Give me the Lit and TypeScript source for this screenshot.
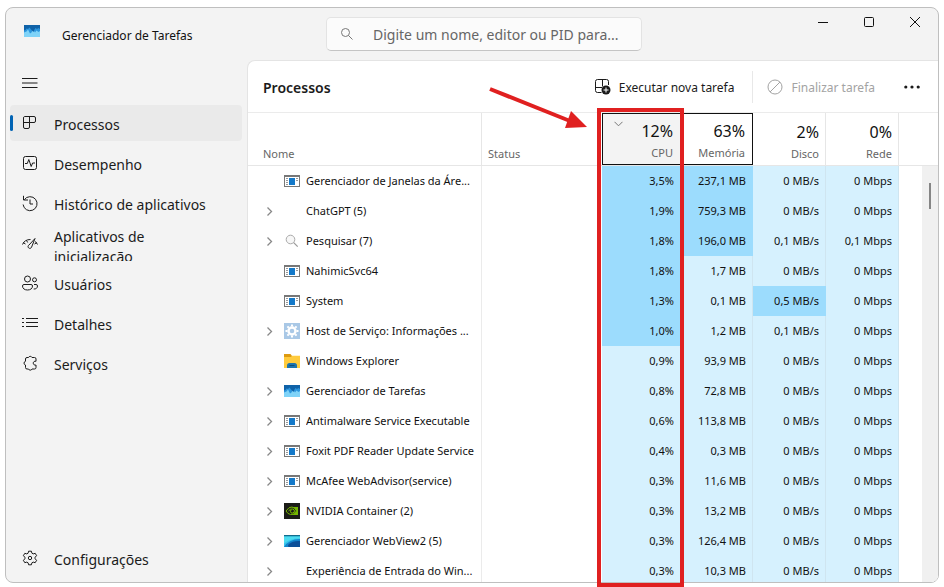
import { LitElement, html, svg, css, nothing } from "lit";
import { customElement, state } from "lit/decorators.js";
import { classMap } from "lit/directives/class-map.js";

const line = (body: unknown, cls = "ico") =>
  html`<svg class=${cls} viewBox="0 0 16 16" aria-hidden="true">${body}</svg>`;

const icons = {
  menu: line(svg`<path d="M0 3.500h15.500M0 8h15.500M0 12.500h15.500"/>`),
  processos: line(svg`<path d="M2.500 1.500h9.500a1.500 1.500 0 0 1 1.500 1.500v3a1.500 1.500 0 0 1-1.500 1.500h-4.500v4.500a1.500 1.500 0 0 1-1.500 1.500h-3a1.500 1.500 0 0 1-1.500-1.500v-9a1.500 1.500 0 0 1 1-1.500zM7.500 1.500v6M1.500 7.500h6"/>`),
  desempenho: line(svg`<rect x="1.500" y="1.500" width="13" height="13" rx="2"/><path d="M3 8.500h2.300l1.500-4 2.400 7 1.400-3.500h2.400"/>`),
  historico: line(svg`<path d="M2.300 4.700A7 7 0 1 1 1.100 9.500M1.500 .8v4.200h4.500M8 4.500v4.500h3"/>`),
  inicializacao: line(svg`<path d="M.5 9.500q2-5 8-5M13 6.500a8 8 0 0 1 2.500 3M1 7.500l2.500 1.500M4.500 5.500l1.200 2M15 7.500l-2.500 1.500M13 3.500l-6 6.500a1.800 1.800 0 1 0 2.500 2.300z"/>`),
  usuarios: line(svg`<circle cx="5.500" cy="4" r="3"/><circle cx="12.500" cy="4.800" r="2"/><path d="M2 9.500h7a1.500 1.500 0 0 1 1.500 1.500c0 2.500-2 4-5 4s-5-1.500-5-4a1.500 1.500 0 0 1 1.500-1.500zM12 9.500h2a1.500 1.500 0 0 1 1.500 1.500c0 2-1.500 3.200-3.800 3"/>`),
  detalhes: line(svg`<path d="M4 3.500h12M4 7.500h12M4 11.500h12M0 3.500h2M0 7.500h2M0 11.500h2"/>`),
  servicos: line(svg`<path d="M5 2.500h1.500a1.900 1.900 0 0 1 3.500 0h2.500a1.500 1.500 0 0 1 1.500 1.500v2.300a2 2 0 1 0 0 3.700v2.500a1.500 1.500 0 0 1-1.500 1.500h-2.500a1.900 1.900 0 0 1-3.500 0h-1.500a1.500 1.500 0 0 1-1.500-1.500v-2.500a1.900 1.900 0 0 1 0-3.700v-2.300a1.500 1.500 0 0 1 1.500-1.500z"/>`),
  config: line(svg`<path d="M6.600 1.200h2.800l.5 2 1.300.7 2-.6 1.400 2.400-1.500 1.500v1.600l1.500 1.500-1.400 2.400-2-.6-1.300.7-.5 2h-2.800l-.5-2-1.300-.7-2 .6-1.400-2.400 1.500-1.500v-1.600l-1.500-1.500 1.400-2.400 2 .6 1.300-.7z"/><circle cx="8" cy="8" r="1.700"/>`),
  executar: line(svg`<path d="M6.500 13.500h-4a2 2 0 0 1-2-2v-9a2 2 0 0 1 2-2h9a2 2 0 0 1 2 2v3.500M7.500 .5v7M.5 8.500h6.500"/><circle cx="11" cy="11" r="4.500" class="fill"/><path class="white" d="M11 8.500v5M8.500 11h5"/>`),
  finalizar: line(svg`<circle cx="8" cy="8" r="7"/><path d="M3 13l10-10"/>`),
  mais: line(svg`<circle cx="1.800" cy="8" r="1.600" class="fill"/><circle cx="8" cy="8" r="1.600" class="fill"/><circle cx="14.200" cy="8" r="1.600" class="fill"/>`),
  lupa: line(svg`<circle cx="6.500" cy="6.500" r="4"/><path d="M9.500 9.500l4 4"/>`),
};

const gerenciador = svg`<rect y="2" width="16" height="12" fill="#7fd3f8"/><path d="M0 2h16v6l-1.500 1-2-1.500-1.500 2-2-3-1.500 3-1.500 1-2-4-1.500 2-2.500 1z" fill="#2b95dd"/><path d="M0 2h16v4l-1.500-1-1.500 1-1.500-1-1 1.500-1 2.500-2-2-2-2.500-1.500 1.500-1.500-.5-1 1.500-1.500.5z" fill="#0f62a8"/>`;

const appIcons: Record<string, unknown> = {
  janela: svg`<rect x=".5" y="2.500" width="15" height="11" fill="#fff" stroke="#777"/><path d="M0 3h16" stroke="#777" stroke-width="2"/><path d="M2 5.500h2M2 7.500h2M2 9.500h2M2 11.500h2M12 5.500h2M12 7.500h2" stroke="#999"/><rect x="5" y="5" width="6" height="7" fill="#1479c9"/>`,
  lupa: svg`<circle cx="6.500" cy="6.500" r="4.300" fill="#f7f7f7" stroke="#aaa"/><path d="M9.700 9.700l4 4" stroke="#999" stroke-width="1.200"/>`,
  host: svg`<rect width="16" height="16" fill="#a9c8e6"/><circle cx="8" cy="8" r="3.500" fill="none" stroke="#fff" stroke-width="2.400"/><path d="M8 1.500v2M8 12.500v2M1.500 8h2M12.500 8h2M3.400 3.400l1.400 1.400M11.200 11.200l1.400 1.400M12.600 3.400l-1.400 1.400M4.800 11.200l-1.400 1.400" stroke="#fff" stroke-width="2"/>`,
  pasta: svg`<path d="M0 1h6.500l1.500 2v3h-8z" fill="#dd9a10"/><path d="M0 4h7l1-1.200h8v12.200h-16z" fill="#ffcb3d"/><path d="M3 15v-2.500q0-2.500 2.500-2.500h5q2.500 0 2.500 2.500v2.500z" fill="#1d74ad"/><path d="M5.500 12.500h5" stroke="#0d4c78"/>`,
  gerenciador,
  nvidia: svg`<rect width="16" height="16" fill="#1b1c17"/><path d="M7 4h7v8h-7z" fill="#76b900"/><path d="M2 8q3-4.500 6-4 3 .5 4.500 4-3 4-6 3.500-3-.5-4.500-3.500z" fill="#1b1c17" stroke="#76b900"/><path d="M4.500 8q2-2.500 4-2t2 2-2 2-2-1.500 1-1.500" fill="none" stroke="#76b900"/>`,
  webview: svg`<rect y="2" width="16" height="12" fill="#38c4ec"/><path d="M0 2h16v1.500h-16z" fill="#126c8c"/><path d="M0 3.500h16v2q-9-.5-16 5z" fill="#4cdcf0"/><path d="M0 14q5-8 16-8v8z" fill="#1284cc"/><path d="M5 14q-2-1 0-3 4-3.500 11-3v6z" fill="#0c4f99"/>`,
};

interface Proc { nome: string; icone?: string; grupo?: boolean; v: string[]; hot: string; }

const p = (nome: string, icone: string, grupo: boolean, v: string, hot: string): Proc =>
  ({ nome, icone, grupo, v: v.split("|"), hot });

// "hot" marks which of CPU, memory, disk and network are drawn in the stronger blue
const processos: Proc[] = [
  p("Gerenciador de Janelas da Áre...", "janela", false, "3,5%|237,1 MB|0 MB/s|0 Mbps", "1100"),
  p("ChatGPT (5)", "", true, "1,9%|759,3 MB|0 MB/s|0 Mbps", "1100"),
  p("Pesquisar (7)", "lupa", true, "1,8%|196,0 MB|0,1 MB/s|0,1 Mbps", "1100"),
  p("NahimicSvc64", "janela", false, "1,8%|1,7 MB|0 MB/s|0 Mbps", "1000"),
  p("System", "janela", false, "1,3%|0,1 MB|0,5 MB/s|0 Mbps", "1010"),
  p("Host de Serviço: Informações ...", "host", true, "1,0%|1,2 MB|0,1 MB/s|0 Mbps", "1000"),
  p("Windows Explorer", "pasta", false, "0,9%|93,9 MB|0 MB/s|0 Mbps", "0000"),
  p("Gerenciador de Tarefas", "gerenciador", true, "0,8%|72,8 MB|0 MB/s|0 Mbps", "0000"),
  p("Antimalware Service Executable", "janela", true, "0,6%|113,8 MB|0 MB/s|0 Mbps", "0000"),
  p("Foxit PDF Reader Update Service", "janela", true, "0,4%|0,3 MB|0 MB/s|0 Mbps", "0000"),
  p("McAfee WebAdvisor(service)", "janela", true, "0,3%|11,6 MB|0 MB/s|0 Mbps", "0000"),
  p("NVIDIA Container (2)", "nvidia", true, "0,3%|13,2 MB|0 MB/s|0 Mbps", "0000"),
  p("Gerenciador WebView2 (5)", "webview", true, "0,3%|126,4 MB|0 MB/s|0 Mbps", "0000"),
  p("Experiência de Entrada do Win...", "", true, "0,3%|10,3 MB|0 MB/s|0 Mbps", "0000"),
];

const nav: [string, unknown][] = [
  ["Processos", icons.processos],
  ["Desempenho", icons.desempenho],
  ["Histórico de aplicativos", icons.historico],
  ["Aplicativos de inicialização", icons.inicializacao],
  ["Usuários", icons.usuarios],
  ["Detalhes", icons.detalhes],
  ["Serviços", icons.servicos],
];

const metricas = [
  ["12%", "CPU", "boxed sorted"],
  ["63%", "Memória", "boxed"],
  ["2%", "Disco", ""],
  ["0%", "Rede", ""],
];

@customElement("app-root")
export class AppRoot extends LitElement {
  @state() private atual = "Processos";

  static styles = css`
    :host {
      display: block;
      position: relative;
      box-sizing: border-box;
      height: 100vh;
      padding: 7px 5px 4px;
      background: #fff;
      color: #1b1b1b;
      font-family: "Noto Sans", "Open Sans", sans-serif;
      font-size: 12px;
    }
    * { box-sizing: border-box; }
    button {
      font: inherit; color: inherit; background: none; border: 0;
      padding: 0; margin: 0; text-align: left;
    }
    .ico {
      width: 16px; height: 16px; flex: none; display: block;
      fill: none; stroke: currentColor; stroke-width: 1; overflow: visible;
    }
    .ico .fill { fill: currentColor; stroke: none; }
    .ico .white { stroke: #fff; }
    .app { width: 16px; height: 16px; flex: none; display: block; }

    .window {
      height: 100%; display: flex; flex-direction: column;
      border: 1px solid #bfbfbf; border-radius: 8px;
      background: #f3f3f3; overflow: hidden;
    }
    .titlebar { display: flex; flex: none; height: 52px; }
    .brand { display: flex; width: 320px; padding-left: 18px; gap: 22px; }
    .brand .app { margin-top: 15px; }
    .brand h1 { margin: 0; font-size: 12px; font-weight: 400; line-height: 56px; color: #111; }
    .search {
      display: flex; align-items: center; gap: 18px; width: 316px; height: 34px;
      margin-top: 9px; padding-left: 12px; color: #777;
      background: #fbfbfb; border: 1px solid #e3e3e3; border-bottom-color: #c4c4c4; border-radius: 5px;
    }
    .search input {
      flex: 1; min-width: 0; border: 0; outline: 0; padding: 0; background: none;
      font: inherit; font-size: 14px; color: #1b1b1b;
    }
    .search input::placeholder { color: #666; opacity: 1; }
    .controls { display: flex; margin-left: auto; height: 28px; }
    .controls button { width: 46px; display: grid; place-items: center; color: #111; }
    .controls .ico { width: 12px; height: 12px; }

    .body { flex: 1; min-height: 0; display: flex; }
    .side { width: 241px; flex: none; display: flex; flex-direction: column; gap: 4px; padding: 4px 5px 6px 4px; }
    .side button {
      display: flex; align-items: center; gap: 16px; height: 36px; flex: none; overflow: hidden;
      padding-left: 12px; border-radius: 4px; font-size: 14px; line-height: 20px;
    }
    .side .menu { height: 37px; }
    .side span { max-width: 160px; padding-top: 4px; }
    .side .tall span { max-width: 120px; height: 36px; padding-top: 2px; }
    .side .sel { background: #eaeaea; position: relative; }
    .side .sel::before {
      content: ""; position: absolute; left: 0; top: 10px; width: 3px; height: 16px;
      border-radius: 2px; background: #0063b4;
    }
    .side .end { margin-top: auto; }

    .main {
      flex: 1; min-width: 0; display: flex; flex-direction: column;
      background: #fff; border: 1px solid #e4e4e4; border-width: 1px 0 0 1px; border-radius: 8px 0 0 0;
    }
    .toolbar {
      display: flex; align-items: center; flex: none; height: 52px;
      padding: 0 18px 0 15px; border-bottom: 1px solid #ebebeb;
    }
    .toolbar h2 { margin: 0 auto 0 0; padding-top: 2px; font-size: 14px; font-weight: 600; }
    .toolbar button { display: flex; align-items: center; gap: 8px; }
    .toolbar span { padding-top: 2px; }
    .toolbar .off { color: #a3a3a3; }
    .toolbar .rule { width: 1px; height: 32px; margin: 0 14px 0 18px; background: #e8e8e8; }
    .toolbar .more { margin-left: 29px; }

    .list { position: relative; flex: 1; min-height: 0; overflow: hidden; }
    table { width: 100%; table-layout: fixed; border-collapse: separate; border-spacing: 0; font-size: 11px; color: #111; }
    .c-name { width: 234px; }
    .c-status { width: 120px; }
    .c-cpu { width: 79px; }
    .c-mem { width: 72px; }
    .c-num { width: 73px; }
    th {
      height: 53px; padding: 0; font-weight: 400; text-align: right; vertical-align: bottom;
      border-bottom: 1px solid #e6e6e6; border-right: 1px solid #e6e6e6;
    }
    th:last-child, th:nth-child(2) { border-right: 0; }
    th button {
      position: relative; display: flex; flex-direction: column; justify-content: flex-end;
      width: 100%; height: 52px; padding: 0 6px 2px; line-height: 18px; color: #666;
    }
    th .metric { align-items: flex-end; }
    th .name { padding-left: 15px; }
    th strong { font-size: 16px; line-height: 26px; font-weight: 400; color: #111; }
    th.boxed { border-right: 0; }
    th.boxed button { border: 1px solid #111; padding-right: 7px; }
    th.sorted button { background: #f3f3f3; }
    .caret { position: absolute; left: 11px; top: 7px; width: 9px; height: 6px; fill: none; stroke: #777; }
    td { height: 30px; padding: 0 6px 0 0; line-height: 30px; text-align: right; white-space: nowrap; }
    td.name { padding: 0 0 0 18px; border-right: 1px solid #ebebeb; }
    .cell { display: flex; align-items: center; gap: 6px; }
    .cell span { flex: 1; min-width: 0; text-align: left; overflow: hidden; text-overflow: ellipsis; }
    .expand { width: 12px; height: 16px; display: grid; align-items: center; }
    .expand svg { width: 7px; height: 9px; fill: none; stroke: #888; stroke-width: 1.3; }
    td.heat { background: #d6f1fe; border-right: 1px solid #cfe5f0; }
    td.hot { background: #9cdcfd; border-right-color: #9cdcfd; }
    td.cpu { border-right: 0; padding-right: 7px; }
    .scroll { position: absolute; right: 0; top: 53px; bottom: 0; width: 16px; background: #f0f0f0; }
    .scroll i { display: block; width: 2px; height: 26px; margin: 17px 7px; background: #858585; }

    .frame { position: absolute; left: 597px; top: 108px; bottom: 0; width: 87px; border: 4px solid #e02020; }
    .arrow { position: absolute; left: 488px; top: 84px; width: 102px; height: 50px; fill: #e02020; stroke: #e02020; }
  `;

  private row(r: Proc) {
    return html`<tr>
      <td class="name"><div class="cell">
        <button class="expand" ?disabled=${!r.grupo} aria-label=${r.nome}>
          ${r.grupo ? html`<svg viewBox="0 0 7 9"><path d="M1.500 .5l4 4-4 4"/></svg>` : nothing}
        </button>
        <svg class="app" viewBox="0 0 16 16" aria-hidden="true">${r.icone ? appIcons[r.icone] : nothing}</svg>
        <span>${r.nome}</span>
      </div></td>
      <td></td>
      ${r.v.map((v, i) => html`<td class=${classMap({ heat: true, cpu: i === 0, hot: r.hot[i] === "1" })}>${v}</td>`)}
      <td></td>
    </tr>`;
  }

  render() {
    return html`
      <div class="window">
        <header class="titlebar">
          <div class="brand">
            <svg class="app" viewBox="0 0 16 16" aria-hidden="true">${gerenciador}</svg>
            <h1>Gerenciador de Tarefas</h1>
          </div>
          <label class="search">${icons.lupa}
            <input type="text" aria-label="Pesquisar" placeholder="Digite um nome, editor ou PID para..." />
          </label>
          <div class="controls">
            <button aria-label="Minimizar"><svg class="ico" viewBox="0 0 12 12"><path d="M1 6.500h10"/></svg></button>
            <button aria-label="Maximizar"><svg class="ico" viewBox="0 0 12 12"><rect x="1.500" y="1.500" width="9" height="9" rx="1"/></svg></button>
            <button aria-label="Fechar"><svg class="ico" viewBox="0 0 12 12"><path d="M1 1l10 10M11 1l-10 10"/></svg></button>
          </div>
        </header>
        <div class="body">
          <nav class="side">
            <button class="menu" aria-label="Menu">${icons.menu}</button>
            ${nav.map(([t, i]) => html`<button
              class=${classMap({ sel: t === this.atual, tall: t.length > 25 })}
              @click=${() => (this.atual = t)}>${i}<span>${t}</span></button>`)}
            <button class="end">${icons.config}<span>Configurações</span></button>
          </nav>
          <main class="main">
            <div class="toolbar">
              <h2>Processos</h2>
              <button>${icons.executar}<span>Executar nova tarefa</span></button>
              <div class="rule"></div>
              <button class="off" disabled>${icons.finalizar}<span>Finalizar tarefa</span></button>
              <button class="more" aria-label="Mais">${icons.mais}</button>
            </div>
            <div class="list">
              <table>
                <colgroup>
                  <col class="c-name" /><col class="c-status" /><col class="c-cpu" /><col class="c-mem" />
                  <col class="c-num" /><col class="c-num" /><col />
                </colgroup>
                <thead><tr>
                  <th><button class="name">Nome</button></th>
                  <th><button>Status</button></th>
                  ${metricas.map(([v, n, c]) => html`<th class=${c}><button class="metric">
                    ${c.includes("sorted") ? html`<svg class="caret" viewBox="0 0 9 6"><path d="M.5 .8l4 4 4-4"/></svg>` : nothing}
                    <strong>${v}</strong>${n}</button></th>`)}
                  <th></th>
                </tr></thead>
                <tbody>${processos.map((r) => this.row(r))}</tbody>
              </table>
              <div class="scroll"><i></i></div>
            </div>
          </main>
        </div>
      </div>
      <div class="frame"></div>
      <svg class="arrow" viewBox="0 0 102 50" aria-hidden="true">
        <path d="M2 5l80 32" stroke-width="4"/><path d="M99 43l-16-16-6 17z" stroke="none"/>
      </svg>
    `;
  }
}
